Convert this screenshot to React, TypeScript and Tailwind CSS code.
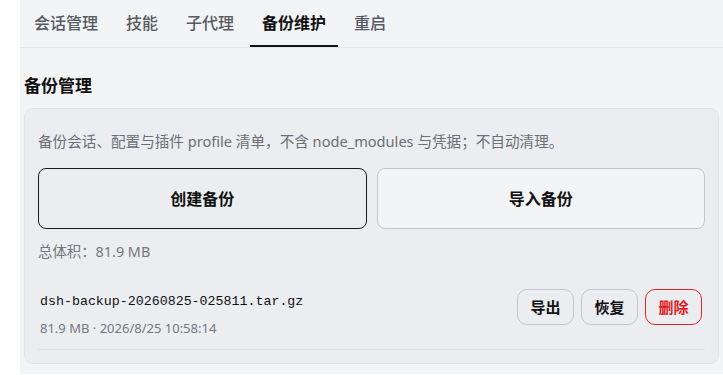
import React from 'react'

const tabs = ['会话管理', '技能', '子代理', '备份维护', '重启']

const font = { fontFamily: '"Noto Sans", "Noto Sans CJK SC", sans-serif' }

const App: React.FC = () => {
  const active = '备份维护'
  return (
    <div className="h-[375px] w-[723px] bg-white pl-5" style={font}>
      <div className="h-[374px] bg-[#f3f4f6]">
        <div className="flex gap-1 border-b border-[#e3e5ea] pl-0.5">
          {tabs.map((t) => (
            <div
              key={t}
              className={
                t === active
                  ? 'border-b-2 border-[#111] px-3 pb-[7px] pt-[8px] text-[16px] font-bold leading-[30px] text-[#111]'
                  : 'border-b-2 border-transparent px-3 pb-[7px] pt-[8px] text-[16px] font-medium leading-[30px] text-[#555a63]'
              }
            >
              {t}
            </div>
          ))}
        </div>

        <div className="px-1 pt-[26px]">
          <h2 className="text-[17px] font-bold leading-[24px] text-[#111]">备份管理</h2>
          <div className="mt-[10px] rounded-[9px] border border-[#e2e4e9] bg-[#ecedf1] px-[13px] pb-[13px] pt-[21px]">
            <p className="text-[14.6px] leading-[22px] text-[#6b6f76]">
              备份会话、配置与插件 profile 清单，不含 node_modules 与凭据；不自动清理。
            </p>
            <div className="mt-[16px] grid grid-cols-2 gap-[10px]">
              <button className="h-[61px] rounded-[8px] border border-[#1a1a1a] bg-[#ecedf1] text-[16px] font-bold text-[#111]">
                创建备份
              </button>
              <button className="h-[61px] rounded-[8px] border border-[#c3c6cd] bg-[#f3f4f6] text-[16px] font-bold text-[#111]">
                导入备份
              </button>
            </div>
            <div className="mt-[13px] text-[14.4px] leading-[20px] text-[#73777e]">总体积：81.9 MB</div>
            <div className="mt-[29px] flex items-start justify-between border-b border-[#dfe1e6] pb-[12px] pl-[2px] pr-[3px]">
              <div className="pt-[1px]">
                <div
                  className="text-[13.3px] leading-[20px] text-[#111]"
                  style={{ fontFamily: '"Liberation Mono", monospace' }}
                >
                  dsh-backup-20260825-025811.tar.gz
                </div>
                <div className="mt-[7px] text-[13px] leading-[18px] text-[#73777e]">
                  81.9 MB · 2026/8/25 10:58:14
                </div>
              </div>
              <div className="-mt-[2px] flex gap-[7px]">
                <button className="h-[36px] w-[57px] rounded-[10px] border border-[#c3c6cd] bg-[#ecedf1] text-[15px] font-bold text-[#111]">
                  导出
                </button>
                <button className="h-[36px] w-[57px] rounded-[10px] border border-[#c3c6cd] bg-[#ecedf1] text-[15px] font-bold text-[#111]">
                  恢复
                </button>
                <button className="h-[36px] w-[57px] rounded-[10px] border border-[#e5262b] bg-[#ecedf1] text-[15px] font-bold text-[#e01b22]">
                  删除
                </button>
              </div>
            </div>
          </div>
        </div>
      </div>
    </div>
  )
}

export default App
